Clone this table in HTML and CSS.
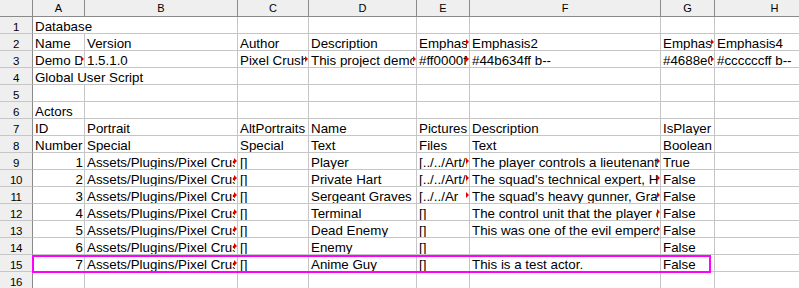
FILE: index.html
```html
<!DOCTYPE html>
<html>
<head>
<meta charset="utf-8">
<link rel="stylesheet" href="styles.css">
</head>
<body>
<div class="sheet">
  <div class="c corner"></div>
  <div class="c hd">A</div><div class="c hd">B</div><div class="c hd">C</div><div class="c hd">D</div><div class="c hd">E</div><div class="c hd">F</div><div class="c hd">G</div><div class="c hd">H</div>

  <div class="c rh">1</div>
  <div class="c span2">Database</div><div class="c"></div><div class="c"></div><div class="c"></div><div class="c"></div><div class="c"></div><div class="c"></div>

  <div class="c rh">2</div>
  <div class="c">Name</div><div class="c">Version</div><div class="c">Author</div><div class="c">Description</div><div class="c clip">Emphasis1</div><div class="c">Emphasis2</div><div class="c clip">Emphasis3</div><div class="c">Emphasis4</div>

  <div class="c rh">3</div>
  <div class="c clip">Demo Database</div><div class="c">1.5.1.0</div><div class="c clip">Pixel Crushers</div><div class="c clip">This project demonstrates</div><div class="c clip">#ff0000ff b--</div><div class="c">#44b634ff b--</div><div class="c clip">#4688e0ff b--</div><div class="c">#ccccccff b--</div>

  <div class="c rh">4</div>
  <div class="c span2">Global User Script</div><div class="c"></div><div class="c"></div><div class="c"></div><div class="c"></div><div class="c"></div><div class="c"></div>

  <div class="c rh">5</div>
  <div class="c"></div><div class="c"></div><div class="c"></div><div class="c"></div><div class="c"></div><div class="c"></div><div class="c"></div><div class="c"></div>

  <div class="c rh">6</div>
  <div class="c">Actors</div><div class="c"></div><div class="c"></div><div class="c"></div><div class="c"></div><div class="c"></div><div class="c"></div><div class="c"></div>

  <div class="c rh">7</div>
  <div class="c">ID</div><div class="c">Portrait</div><div class="c">AltPortraits</div><div class="c">Name</div><div class="c">Pictures</div><div class="c">Description</div><div class="c">IsPlayer</div><div class="c"></div>

  <div class="c rh">8</div>
  <div class="c">Number</div><div class="c">Special</div><div class="c">Special</div><div class="c">Text</div><div class="c">Files</div><div class="c">Text</div><div class="c">Boolean</div><div class="c"></div>

  <div class="c rh">9</div>
  <div class="c num">1</div><div class="c clip">Assets/Plugins/Pixel Crushers/Dialogue System</div><div class="c">[]</div><div class="c">Player</div><div class="c clip">[../../Art/Portraits]</div><div class="c clip">The player controls a lieutenant in the squad</div><div class="c">True</div><div class="c"></div>

  <div class="c rh">10</div>
  <div class="c num">2</div><div class="c clip">Assets/Plugins/Pixel Crushers/Dialogue System</div><div class="c">[]</div><div class="c">Private Hart</div><div class="c clip">[../../Art/Portraits]</div><div class="c clip">The squad's technical expert, Hart</div><div class="c">False</div><div class="c"></div>

  <div class="c rh">11</div>
  <div class="c num">3</div><div class="c clip">Assets/Plugins/Pixel Crushers/Dialogue System</div><div class="c">[]</div><div class="c">Sergeant Graves</div><div class="c clip">[../../Ar</div><div class="c clip">The squad's heavy gunner, Graves</div><div class="c">False</div><div class="c"></div>

  <div class="c rh">12</div>
  <div class="c num">4</div><div class="c clip">Assets/Plugins/Pixel Crushers/Dialogue System</div><div class="c">[]</div><div class="c">Terminal</div><div class="c">[]</div><div class="c clip">The control unit that the player controls</div><div class="c">False</div><div class="c"></div>

  <div class="c rh">13</div>
  <div class="c num">5</div><div class="c clip">Assets/Plugins/Pixel Crushers/Dialogue System</div><div class="c">[]</div><div class="c">Dead Enemy</div><div class="c">[]</div><div class="c clip">This was one of the evil emperor's soldiers</div><div class="c">False</div><div class="c"></div>

  <div class="c rh">14</div>
  <div class="c num">6</div><div class="c clip">Assets/Plugins/Pixel Crushers/Dialogue System</div><div class="c">[]</div><div class="c">Enemy</div><div class="c">[]</div><div class="c"></div><div class="c">False</div><div class="c"></div>

  <div class="c rh">15</div>
  <div class="c num">7</div><div class="c clip">Assets/Plugins/Pixel Crushers/Dialogue System</div><div class="c">[]</div><div class="c">Anime Guy</div><div class="c">[]</div><div class="c">This is a test actor.</div><div class="c">False</div><div class="c"></div>

  <div class="c rh">16</div>
  <div class="c"></div><div class="c"></div><div class="c"></div><div class="c"></div><div class="c"></div><div class="c"></div><div class="c"></div><div class="c"></div>

  <div class="sel"></div>
</div>
</body>
</html>
```
FILE: styles.css
```css
html, body {
  margin: 0;
  padding: 0;
  background: #ffffff;
  overflow: hidden;
}

.sheet {
  position: relative;
  display: grid;
  grid-template-columns: 33px 52px 153px 71px 108px 53px 191px 54px 120px;
  grid-auto-rows: 17px;
  width: 835px;
  font-family: "Liberation Sans", Arial, sans-serif;
  font-size: 13.33px;
  color: #000000;
}

.c {
  box-sizing: border-box;
  border-right: 1px solid #c6c6c6;
  border-bottom: 1px solid #c6c6c6;
  padding: 2px 1px 0 2px;
  line-height: 15px;
  white-space: nowrap;
  overflow: hidden;
  position: relative;
}

.corner {
  background: #efefef;
  border-right-color: #8a8a8a;
  border-bottom-color: #8a8a8a;
}

.hd {
  background: #efefef;
  border-right-color: #8a8a8a;
  border-bottom-color: #8a8a8a;
  text-align: center;
  font-size: 11px;
  padding: 1px 0 0 0;
  line-height: 15px;
}

.rh {
  background: #efefef;
  border-right-color: #8a8a8a;
  text-align: center;
  font-size: 11.5px;
  letter-spacing: -0.5px;
  padding: 3px 0 0 0;
  line-height: 14px;
}

.span2 {
  grid-column: span 2;
  overflow: visible;
}

.num {
  text-align: right;
  padding-right: 1px;
}

.clip::before {
  content: "";
  position: absolute;
  right: 0;
  top: 0;
  bottom: 0;
  width: 2px;
  background: #ffffff;
}

.clip::after {
  content: "";
  position: absolute;
  right: 0;
  top: 5px;
  width: 0;
  height: 0;
  border-left: 3px solid #e00000;
  border-top: 3px solid transparent;
  border-bottom: 3px solid transparent;
}

.sel {
  position: absolute;
  left: 32px;
  top: 255px;
  width: 679px;
  height: 18px;
  box-sizing: border-box;
  border: 2px solid #ff00ff;
  pointer-events: none;
}
```
